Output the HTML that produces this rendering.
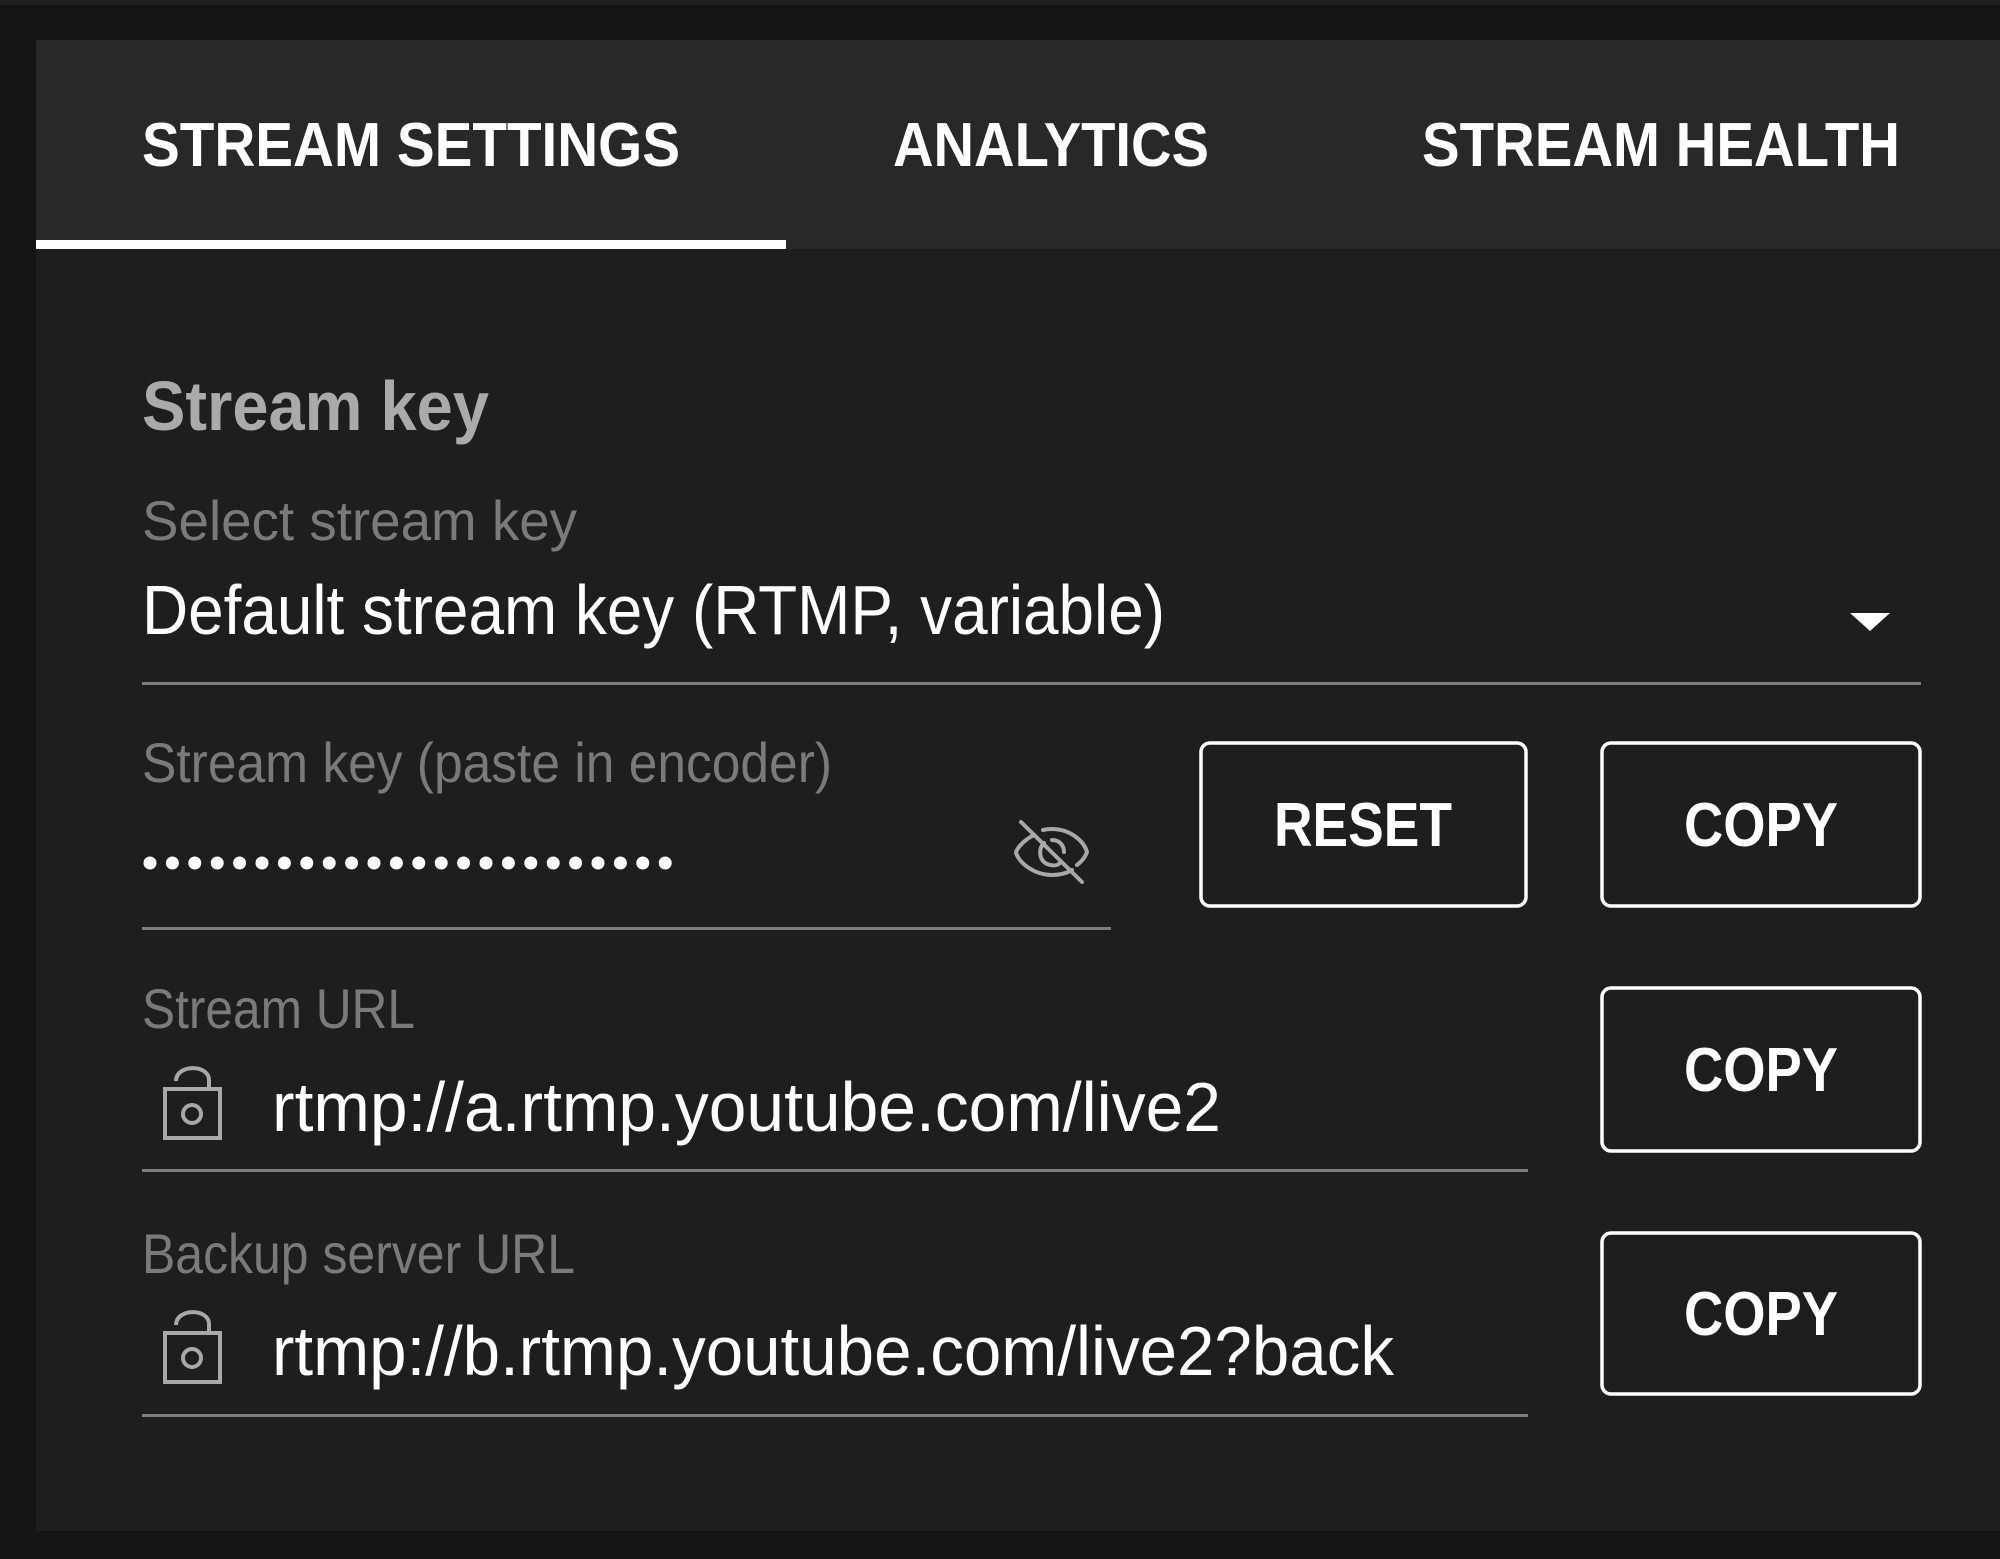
<!DOCTYPE html>
<html><head><meta charset="utf-8"><style>
html,body{margin:0;padding:0;background:#141414;}
svg{display:block}
text{font-family:"Liberation Sans",Arial,sans-serif;}
</style></head><body>
<svg width="2000" height="1559" viewBox="0 0 2000 1559" xmlns="http://www.w3.org/2000/svg">
<rect x="0" y="0" width="2000" height="1559" fill="#141414"/>
<rect x="0" y="0" width="2000" height="5" fill="#1f1f1f"/>
<rect x="36" y="40" width="1964" height="1491" fill="#1e1e1e"/>
<rect x="36" y="40" width="1964" height="209" fill="#282828"/>
<rect x="36" y="240" width="750" height="9" fill="#ffffff"/>
<g fill="#ffffff" font-size="62" font-weight="700">
<text x="142" y="166" textLength="538" lengthAdjust="spacingAndGlyphs">STREAM SETTINGS</text>
<text x="893" y="166" textLength="316" lengthAdjust="spacingAndGlyphs">ANALYTICS</text>
<text x="1422" y="166" textLength="478" lengthAdjust="spacingAndGlyphs">STREAM HEALTH</text>
</g>
<text x="142" y="430" font-size="70" font-weight="700" fill="#aaaaaa" textLength="347" lengthAdjust="spacingAndGlyphs">Stream key</text>
<g fill="#7a7a7a" font-size="56">
<text x="142" y="540" textLength="435" lengthAdjust="spacingAndGlyphs">Select stream key</text>
<text x="142" y="782" textLength="690" lengthAdjust="spacingAndGlyphs">Stream key (paste in encoder)</text>
<text x="142" y="1028" textLength="273" lengthAdjust="spacingAndGlyphs">Stream URL</text>
<text x="142" y="1273" textLength="433" lengthAdjust="spacingAndGlyphs">Backup server URL</text>
</g>
<g fill="#ffffff" font-size="70">
<text x="142" y="634" textLength="1023" lengthAdjust="spacingAndGlyphs">Default stream key (RTMP, variable)</text>
<text x="272" y="1131" textLength="949" lengthAdjust="spacingAndGlyphs">rtmp://a.rtmp.youtube.com/live2</text>
<text x="272" y="1375" textLength="1122" lengthAdjust="spacingAndGlyphs">rtmp://b.rtmp.youtube.com/live2?back</text>
</g>
<polygon points="1850,613 1890,613 1870,631" fill="#ffffff"/>
<g fill="#7d7d7d">
<rect x="142" y="682" width="1779" height="3"/>
<rect x="142" y="927" width="969" height="3"/>
<rect x="142" y="1169" width="1386" height="3"/>
<rect x="142" y="1414" width="1386" height="3"/>
</g>
<g fill="#ffffff">
<circle cx="150" cy="863" r="6.5"/><circle cx="172.4" cy="863" r="6.5"/><circle cx="194.8" cy="863" r="6.5"/><circle cx="217.2" cy="863" r="6.5"/><circle cx="239.6" cy="863" r="6.5"/><circle cx="262" cy="863" r="6.5"/><circle cx="284.4" cy="863" r="6.5"/><circle cx="306.8" cy="863" r="6.5"/><circle cx="329.2" cy="863" r="6.5"/><circle cx="351.6" cy="863" r="6.5"/><circle cx="374" cy="863" r="6.5"/><circle cx="396.4" cy="863" r="6.5"/><circle cx="418.8" cy="863" r="6.5"/><circle cx="441.2" cy="863" r="6.5"/><circle cx="463.6" cy="863" r="6.5"/><circle cx="486" cy="863" r="6.5"/><circle cx="508.4" cy="863" r="6.5"/><circle cx="530.8" cy="863" r="6.5"/><circle cx="553.2" cy="863" r="6.5"/><circle cx="575.6" cy="863" r="6.5"/><circle cx="598" cy="863" r="6.5"/><circle cx="620.4" cy="863" r="6.5"/><circle cx="642.8" cy="863" r="6.5"/><circle cx="665.2" cy="863" r="6.5"/>
</g>
<!-- eye-off icon -->
<g fill="none" stroke="#a8a8a8" stroke-width="4" stroke-linecap="round">
<path d="M1034,835 C1022,841 1016,850 1016,853 C1020,864 1035,875 1052,875 C1060,875 1067,873 1072,870"/>
<path d="M1043,830 C1047,829 1050,829 1052,829 C1070,829 1084,841 1087,852 C1085,858 1081,862 1077,865"/>
<path d="M1044,843 C1038,849 1039,860 1047,864 C1052,866 1057,866 1060,863"/>
<path d="M1052,840 C1060,840 1064,846 1064,852"/>
<line x1="1021" y1="822" x2="1082" y2="882"/>
</g>
<!-- locks -->
<g fill="none" stroke="#a8a8a8" stroke-width="4">
<rect x="165" y="1089" width="55" height="49"/>
<path d="M176,1081 C176,1064 209,1064 209,1080 L209,1089"/>
<circle cx="192" cy="1114" r="9"/>
<rect x="165" y="1333" width="55" height="49"/>
<path d="M176,1325 C176,1308 209,1308 209,1324 L209,1333"/>
<circle cx="192" cy="1358" r="9"/>
</g>
<!-- buttons -->
<g fill="none" stroke="#ffffff" stroke-width="3.5">
<rect x="1201" y="743" width="325" height="163" rx="9"/>
<rect x="1602" y="743" width="318" height="163" rx="9"/>
<rect x="1602" y="988" width="318" height="163" rx="9"/>
<rect x="1602" y="1233" width="318" height="161" rx="9"/>
</g>
<g fill="#ffffff" font-size="62" font-weight="700">
<text x="1274" y="846" textLength="178" lengthAdjust="spacingAndGlyphs">RESET</text>
<text x="1684" y="846" textLength="154" lengthAdjust="spacingAndGlyphs">COPY</text>
<text x="1684" y="1091" textLength="154" lengthAdjust="spacingAndGlyphs">COPY</text>
<text x="1684" y="1335" textLength="154" lengthAdjust="spacingAndGlyphs">COPY</text>
</g>
</svg>
</body></html>
